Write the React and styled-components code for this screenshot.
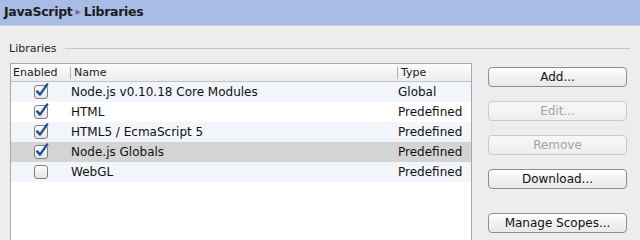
import { styled, createGlobalStyle } from "styled-components";

const GlobalStyle = createGlobalStyle`
  html, body {
    margin: 0;
    padding: 0;
    background: #ededed;
  }
  * {
    box-sizing: border-box;
  }
`;

const libraries = [
  { name: "Node.js v0.10.18 Core Modules", type: "Global", enabled: true },
  { name: "HTML", type: "Predefined", enabled: true },
  { name: "HTML5 / EcmaScript 5", type: "Predefined", enabled: true },
  { name: "Node.js Globals", type: "Predefined", enabled: true, selected: true },
  { name: "WebGL", type: "Predefined", enabled: false },
];

function CheckBox({ checked }) {
  return (
    <svg width="16" height="16" viewBox="0 0 16 16">
      <defs>
        <linearGradient id="cbg" x1="0" y1="0" x2="0" y2="1">
          <stop offset="0" stopColor="#ffffff" />
          <stop offset="1" stopColor="#e2e2e2" />
        </linearGradient>
      </defs>
      <rect x="1.5" y="2.5" width="13" height="13" rx="2.5" fill="url(#cbg)" stroke="#7f7f7f" />
      {checked && (
        <path
          d="M4.2 8.4 L7 11.6 L14.2 1.4"
          fill="none"
          stroke="#244a9a"
          strokeWidth="2.4"
          strokeLinecap="round"
          strokeLinejoin="round"
        />
      )}
    </svg>
  );
}

export default function App() {
  return (
    <>
      <GlobalStyle />
      <Page>
        <Header>
          <Crumb>JavaScript</Crumb>
          <CrumbArrow>▶</CrumbArrow>
          <Crumb>Libraries</Crumb>
        </Header>
        <Body>
          <GroupTitle>
            <GroupLabel>Libraries</GroupLabel>
            <GroupLine />
          </GroupTitle>
          <Main>
            <Table>
              <HeadRow>
                <HeadCell $w={59}>Enabled</HeadCell>
                <HeadCell $w={327} $sep>Name</HeadCell>
                <HeadCell $sep>Type</HeadCell>
              </HeadRow>
              {libraries.map((lib, i) => (
                <Row key={lib.name} $odd={i % 2 === 0} $selected={lib.selected}>
                  <CheckCell>
                    <CheckBox checked={lib.enabled} />
                  </CheckCell>
                  <NameCell>{lib.name}</NameCell>
                  <TypeCell>{lib.type}</TypeCell>
                </Row>
              ))}
            </Table>
            <Buttons>
              <Button>Add...</Button>
              <Button disabled>Edit...</Button>
              <Button disabled>Remove</Button>
              <Button>Download...</Button>
              <Button $spaced>Manage Scopes...</Button>
            </Buttons>
          </Main>
        </Body>
      </Page>
    </>
  );
}

const Page = styled.div`
  width: 640px;
  height: 240px;
  overflow: hidden;
  display: flex;
  flex-direction: column;
  font-family: "DejaVu Sans", "Liberation Sans", sans-serif;
  color: #111;
`;

const Header = styled.div`
  height: 26px;
  flex-shrink: 0;
  background: #a8bce6;
  border-bottom: 1px solid #c3cce2;
  display: flex;
  align-items: center;
  padding: 0 0 2px 4px;
  gap: 3px;
`;

const Crumb = styled.span`
  font-size: 12.5px;
  font-weight: bold;
  color: #1c1c1c;
  letter-spacing: -0.3px;
`;

const CrumbArrow = styled.span`
  font-size: 7px;
  color: #6f7683;
`;

const Body = styled.div`
  flex: 1;
  display: flex;
  flex-direction: column;
  padding: 15px 10px 0 9px;
`;

const GroupTitle = styled.div`
  height: 14px;
  display: flex;
  align-items: center;
  gap: 8px;
`;

const GroupLabel = styled.span`
  font-size: 11px;
  color: #222;
`;

const GroupLine = styled.div`
  flex: 1;
  height: 1px;
  background: #c6c6c6;
`;

const Main = styled.div`
  flex: 1;
  display: flex;
  margin-top: 8px;
`;

const Table = styled.div`
  width: 462px;
  margin-left: 1px;
  background: #fff;
  border: 1px solid #a9a9a9;
  border-bottom: none;
`;

const HeadRow = styled.div`
  height: 18px;
  display: flex;
  background: linear-gradient(#fdfdfd, #ececec);
  border-bottom: 1px solid #c2c2c2;
`;

const HeadCell = styled.div`
  position: relative;
  width: ${(p) => (p.$w ? `${p.$w}px` : "auto")};
  flex: ${(p) => (p.$w ? "none" : 1)};
  font-size: 11px;
  line-height: 17px;
  padding-left: ${(p) => (p.$sep ? "4px" : "2px")};
  color: #1c1c1c;
  &::before {
    content: "";
    display: ${(p) => (p.$sep ? "block" : "none")};
    position: absolute;
    left: 0;
    top: 3px;
    bottom: 2px;
    width: 1px;
    background: #b4b4b4;
  }
`;

const Row = styled.div`
  height: 20px;
  display: flex;
  align-items: center;
  font-size: 12px;
  background: ${(p) => (p.$selected ? "#d4d4d4" : p.$odd ? "#f2f5fa" : "#ffffff")};
`;

const CheckCell = styled.div`
  width: 59px;
  display: flex;
  justify-content: center;
  padding-left: 1px;
  padding-bottom: 3px;
`;

const NameCell = styled.div`
  width: 327px;
  padding-left: 1px;
`;

const TypeCell = styled.div`
  flex: 1;
  padding-left: 1px;
`;

const Buttons = styled.div`
  width: 139px;
  margin-left: 16px;
  padding-top: 4px;
  display: flex;
  flex-direction: column;
  gap: 14px;
`;

const Button = styled.button`
  height: 20px;
  margin-top: ${(p) => (p.$spaced ? "10px" : "0")};
  font-family: "DejaVu Sans", "Liberation Sans", sans-serif;
  font-size: 12px;
  color: #111;
  background: linear-gradient(#ffffff, #f1f1f1 50%, #e9e9e9);
  border: 1px solid #8d8d8d;
  border-radius: 4px;
  padding: 0;
  &:disabled {
    color: #a3a3a3;
    border-color: #c9c9c9;
    background: linear-gradient(#f7f7f7, #efefef);
  }
`;
